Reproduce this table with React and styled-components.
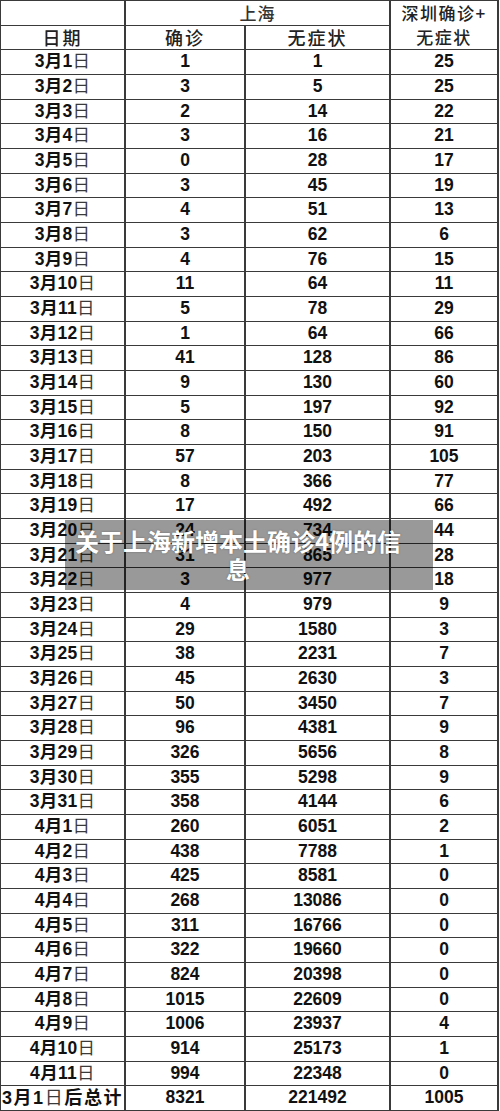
import React from "react";
import styled, { createGlobalStyle } from "styled-components";

const Global = createGlobalStyle`
  html, body { margin: 0; padding: 0; background: #fff; }
  body { width: 500px; }
`;

const rows = [
  ["3", "1", 1, 1, 25], ["3", "2", 3, 5, 25], ["3", "3", 2, 14, 22], ["3", "4", 3, 16, 21],
  ["3", "5", 0, 28, 17], ["3", "6", 3, 45, 19], ["3", "7", 4, 51, 13], ["3", "8", 3, 62, 6],
  ["3", "9", 4, 76, 15], ["3", "10", 11, 64, 11], ["3", "11", 5, 78, 29], ["3", "12", 1, 64, 66],
  ["3", "13", 41, 128, 86], ["3", "14", 9, 130, 60], ["3", "15", 5, 197, 92], ["3", "16", 8, 150, 91],
  ["3", "17", 57, 203, 105], ["3", "18", 8, 366, 77], ["3", "19", 17, 492, 66], ["3", "20", 24, 734, 44],
  ["3", "21", 31, 865, 28], ["3", "22", 3, 977, 18], ["3", "23", 4, 979, 9], ["3", "24", 29, 1580, 3],
  ["3", "25", 38, 2231, 7], ["3", "26", 45, 2630, 3], ["3", "27", 50, 3450, 7], ["3", "28", 96, 4381, 9],
  ["3", "29", 326, 5656, 8], ["3", "30", 355, 5298, 9], ["3", "31", 358, 4144, 6], ["4", "1", 260, 6051, 2],
  ["4", "2", 438, 7788, 1], ["4", "3", 425, 8581, 0], ["4", "4", 268, 13086, 0], ["4", "5", 311, 16766, 0],
  ["4", "6", 322, 19660, 0], ["4", "7", 824, 20398, 0], ["4", "8", 1015, 22609, 0], ["4", "9", 1006, 23937, 4],
  ["4", "10", 914, 25173, 1], ["4", "11", 994, 22348, 0],
];

const Page = styled.div`
  position: relative;
  width: 500px;
  height: 1111px;
`;

const Grid = styled.div`
  box-sizing: border-box;
  width: 499px;
  height: 1111px;
  display: grid;
  grid-template-columns: 123px 118px 143px 106px;
  grid-template-rows: repeat(45, 1fr);
  column-gap: 2px;
  row-gap: 1px;
  padding: 1px 2px 1px 1px;
  background: #3a3a3a;
`;

const Cell = styled.div`
  background: #fff;
  display: flex;
  align-items: center;
  justify-content: center;
  grid-column: ${(p) => p.$col || "auto"};
  grid-row: ${(p) => p.$row || "auto"};
  font-family: "Liberation Sans", "Noto Sans CJK SC", sans-serif;
  font-weight: 700;
  font-size: 17.5px;
  color: #111;
  line-height: 1;
  overflow: hidden;
  white-space: nowrap;
`;

const HeadCell = styled(Cell)`
  font-family: "Noto Sans CJK SC", sans-serif;
  font-weight: 500;
  font-size: ${(p) => p.$size || 18}px;
  color: ${(p) => p.$color || "#222"};
  flex-direction: column;
  line-height: ${(p) => p.$lh || 20}px;
  letter-spacing: ${(p) => p.$ls || 1}px;
`;

const Day = styled.span`
  font-weight: 400;
  color: #3a3a3a;
`;

const DateText = styled.span`
  letter-spacing: 0.3px;
`;

const TotalText = styled.span`
  font-size: 18px;
  letter-spacing: 1.6px;
`;

const Overlay = styled.div`
  position: absolute;
  left: 65px;
  top: 520px;
  width: 368px;
  height: 70px;
  box-sizing: border-box;
  padding: 7px 28px 7px 6px;
  background: rgba(0, 0, 0, 0.4);
  color: #fff;
  font-family: "Noto Sans CJK SC", sans-serif;
  font-weight: 700;
  font-size: 24px;
  line-height: 28px;
  text-align: center;
  text-shadow: 0 0 2px rgba(0, 0, 0, 0.35);
`;

export default function App() {
  return (
    <Page>
      <Global />
      <Grid>
        <HeadCell $col="1" $row="1" />
        <HeadCell $col="2 / 4" $row="1" $size={17} $color="#333">上海</HeadCell>
        <HeadCell $col="4" $row="1 / 3" $size={17} $ls={1.5} $lh={24}>
          <span>深圳确诊+</span>
          <span>无症状</span>
        </HeadCell>
        <HeadCell $col="1" $row="2" $ls={2}>日期</HeadCell>
        <HeadCell $col="2" $row="2" $ls={2}>确诊</HeadCell>
        <HeadCell $col="3" $row="2" $ls={2}>无症状</HeadCell>
        {rows.map(([m, d, a, b, c]) => (
          <React.Fragment key={m + "-" + d}>
            <Cell>
              <DateText>
                {m}月{d}<Day>日</Day>
              </DateText>
            </Cell>
            <Cell>{a}</Cell>
            <Cell>{b}</Cell>
            <Cell>{c}</Cell>
          </React.Fragment>
        ))}
        <Cell>
          <TotalText>3月1<Day>日</Day>后总计</TotalText>
        </Cell>
        <Cell>8321</Cell>
        <Cell>221492</Cell>
        <Cell>1005</Cell>
      </Grid>
      <Overlay>关于上海新增本土确诊4例的信息</Overlay>
    </Page>
  );
}
